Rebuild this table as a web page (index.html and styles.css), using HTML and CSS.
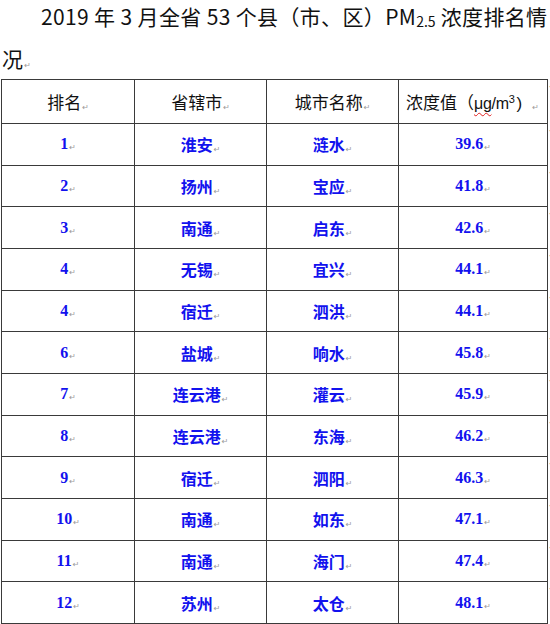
FILE: index.html
```html
<!DOCTYPE html>
<html lang="zh-CN">
<head>
<meta charset="utf-8">
<title>PM2.5 浓度排名</title>
<link rel="stylesheet" href="styles.css">
</head>
<body>
<p class="title">2019 年 3 月全省 53 个县（市、区）PM<sub class="sub">2.5</sub> 浓度排名情况<span class="pm">↵</span></p>
<table class="rank">
  <colgroup>
    <col class="c1"><col class="c2"><col class="c3"><col class="c4">
  </colgroup>
  <thead>
    <tr class="head">
      <th>排名<span class="pm">↵</span></th>
      <th>省辖市<span class="pm">↵</span></th>
      <th>城市名称<span class="pm">↵</span></th>
      <th class="last unit">浓度值（<span class="lat"><span class="spell">μg</span>/m<sup class="sup">3</sup></span><span class="paren">)</span><span class="pm gap">↵</span></th>
    </tr>
  </thead>
  <tbody>
    <tr><td class="num">1<span class="pm">↵</span></td><td class="cn">淮安<span class="pm">↵</span></td><td class="cn">涟水<span class="pm">↵</span></td><td class="num last">39.6<span class="pm">↵</span></td></tr>
    <tr><td class="num">2<span class="pm">↵</span></td><td class="cn">扬州<span class="pm">↵</span></td><td class="cn">宝应<span class="pm">↵</span></td><td class="num last">41.8<span class="pm">↵</span></td></tr>
    <tr><td class="num">3<span class="pm">↵</span></td><td class="cn">南通<span class="pm">↵</span></td><td class="cn">启东<span class="pm">↵</span></td><td class="num last">42.6<span class="pm">↵</span></td></tr>
    <tr><td class="num">4<span class="pm">↵</span></td><td class="cn">无锡<span class="pm">↵</span></td><td class="cn">宜兴<span class="pm">↵</span></td><td class="num last">44.1<span class="pm">↵</span></td></tr>
    <tr><td class="num">4<span class="pm">↵</span></td><td class="cn">宿迁<span class="pm">↵</span></td><td class="cn">泗洪<span class="pm">↵</span></td><td class="num last">44.1<span class="pm">↵</span></td></tr>
    <tr><td class="num">6<span class="pm">↵</span></td><td class="cn">盐城<span class="pm">↵</span></td><td class="cn">响水<span class="pm">↵</span></td><td class="num last">45.8<span class="pm">↵</span></td></tr>
    <tr><td class="num">7<span class="pm">↵</span></td><td class="cn">连云港<span class="pm">↵</span></td><td class="cn">灌云<span class="pm">↵</span></td><td class="num last">45.9<span class="pm">↵</span></td></tr>
    <tr><td class="num">8<span class="pm">↵</span></td><td class="cn">连云港<span class="pm">↵</span></td><td class="cn">东海<span class="pm">↵</span></td><td class="num last">46.2<span class="pm">↵</span></td></tr>
    <tr><td class="num">9<span class="pm">↵</span></td><td class="cn">宿迁<span class="pm">↵</span></td><td class="cn">泗阳<span class="pm">↵</span></td><td class="num last">46.3<span class="pm">↵</span></td></tr>
    <tr><td class="num">10<span class="pm">↵</span></td><td class="cn">南通<span class="pm">↵</span></td><td class="cn">如东<span class="pm">↵</span></td><td class="num last">47.1<span class="pm">↵</span></td></tr>
    <tr><td class="num">11<span class="pm">↵</span></td><td class="cn">南通<span class="pm">↵</span></td><td class="cn">海门<span class="pm">↵</span></td><td class="num last">47.4<span class="pm">↵</span></td></tr>
    <tr><td class="num">12<span class="pm">↵</span></td><td class="cn">苏州<span class="pm">↵</span></td><td class="cn">太仓<span class="pm">↵</span></td><td class="num last">48.1<span class="pm">↵</span></td></tr>
  </tbody>
</table>
</body>
</html>
```
FILE: styles.css
```css
html, body {
  margin: 0;
  padding: 0;
  background: #ffffff;
}
body {
  width: 550px;
  height: 624px;
  overflow: hidden;
  font-family: "Noto Sans CJK SC", "Noto Sans", sans-serif;
  color: #111111;
}
.title {
  margin: -5px 0 0 0;
  padding: 0 0 0 2px;
  width: 550px;
  box-sizing: border-box;
  font-size: 21px;
  letter-spacing: 0.35px;
  line-height: 42px;
  text-indent: 39px;
  font-weight: 400;
}
.sub {
  font-size: 14px;
  letter-spacing: 0;
  vertical-align: -2px;
  line-height: 0;
}
.pm {
  font-family: "DejaVu Sans", sans-serif;
  font-size: 8px;
  font-weight: 400;
  letter-spacing: 0;
  line-height: 0;
  color: #9a9a9a;
  margin-left: 1px;
  vertical-align: -1px;
}
.gap {
  margin-left: 10px;
}
.rank {
  margin-left: 1px;
  border-collapse: collapse;
  table-layout: fixed;
  width: 546px;
}
.c1 { width: 133px; }
.c2 { width: 132px; }
.c3 { width: 132px; }
.c4 { width: 149px; }
.rank th, .rank td {
  border: 1px solid #3a3a3a;
  text-align: center;
  padding: 0;
  white-space: nowrap;
}
.rank td.last, .rank th.last {
  position: relative;
}
.rank td.last::after, .rank th.last::after {
  content: "·";
  position: absolute;
  right: -5px;
  top: 2px;
  font-size: 10px;
  line-height: 10px;
  color: #666666;
  font-family: "DejaVu Sans", sans-serif;
  font-weight: 400;
}
.head th {
  height: 43px;
  font-size: 17px;
  font-weight: 400;
  color: #111111;
}
.head th.unit {
  text-align: left;
  padding-left: 7px;
}
.lat {
  font-family: "Liberation Sans", sans-serif;
  font-size: 16px;
  letter-spacing: -0.3px;
}
.paren {
  font-family: "Liberation Sans", sans-serif;
  font-size: 17px;
  margin-left: 2px;
}
.rank tbody td {
  height: 40.67px;
}
.num {
  font-family: "Liberation Serif", serif;
  font-weight: 700;
  font-size: 16px;
  color: #1212ee;
}
.cn {
  font-family: "Noto Sans CJK SC", sans-serif;
  font-weight: 700;
  font-size: 16px;
  color: #1212ee;
}
.spell {
  text-decoration: underline wavy #e02020;
  text-decoration-thickness: 1px;
  text-underline-offset: 3px;
}
.sup {
  font-size: 11px;
  vertical-align: 6px;
  line-height: 0;
}
```
